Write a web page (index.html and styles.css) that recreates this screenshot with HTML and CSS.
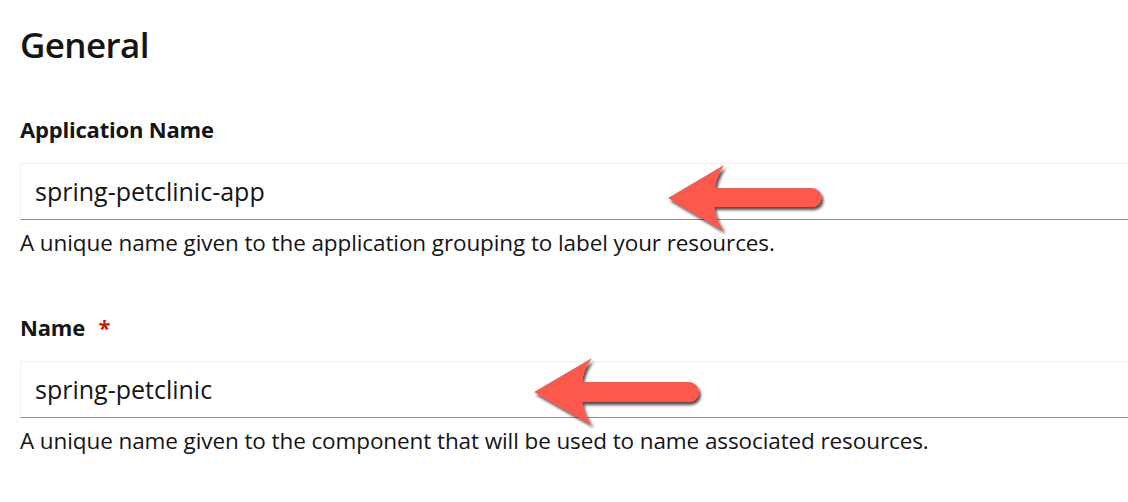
FILE: index.html
```html
<!DOCTYPE html>
<html>
<head>
<meta charset="utf-8">
<link rel="stylesheet" href="styles.css">
</head>
<body>
<div class="page">
  <h1 class="title">General</h1>
  <div class="field">
    <label class="label">Application Name</label>
    <div class="input">spring-petclinic-app</div>
    <div class="helper">A unique name given to the application grouping to label your resources.</div>
    <svg class="arrow arrow-1" width="170" height="90" viewBox="0 0 170 90">
      <defs>
        <filter id="sh1" x="-20%" y="-20%" width="140%" height="160%">
          <feGaussianBlur in="SourceAlpha" stdDeviation="1.6"/>
          <feOffset dx="2" dy="3" result="b"/>
          <feComponentTransfer><feFuncA type="linear" slope="0.7"/></feComponentTransfer>
          <feMerge><feMergeNode/><feMergeNode in="SourceGraphic"/></feMerge>
        </filter>
      </defs>
      <path filter="url(#sh1)" fill="#fd594b" d="M8 43 L64 10 Q56 22 55 33 L152 33 A9.5 9.5 0 0 1 152 52 L54 52 Q56 65 64 76 Z"/>
    </svg>
  </div>
  <div class="field">
    <label class="label">Name <span class="req">*</span></label>
    <div class="input">spring-petclinic</div>
    <div class="helper">A unique name given to the component that will be used to name associated resources.</div>
    <svg class="arrow arrow-2" width="180" height="90" viewBox="0 0 180 90">
      <defs>
        <filter id="sh2" x="-20%" y="-20%" width="140%" height="160%">
          <feGaussianBlur in="SourceAlpha" stdDeviation="1.6"/>
          <feOffset dx="2" dy="3" result="b"/>
          <feComponentTransfer><feFuncA type="linear" slope="0.7"/></feComponentTransfer>
          <feMerge><feMergeNode/><feMergeNode in="SourceGraphic"/></feMerge>
        </filter>
      </defs>
      <path filter="url(#sh2)" fill="#fd594b" d="M8 43 L66 9 Q57 21 56 33 L163 33 A9.8 9.8 0 0 1 163 53 L56 53 Q58 66 66 76 Z"/>
    </svg>
  </div>
</div>
</body>
</html>
```
FILE: styles.css
```css
html, body {
  margin: 0;
  padding: 0;
  background: #ffffff;
  overflow: hidden;
}
.page {
  width: 1128px;
  height: 502px;
  padding-left: 20px;
  box-sizing: border-box;
  overflow: hidden;
  font-family: "Open Sans", "Noto Sans", sans-serif;
  color: #151515;
}
.title {
  margin: 0 0 45px 0;
  padding-top: 20px;
  font-size: 35px;
  font-weight: 600;
  line-height: 49px;
  letter-spacing: -0.6px;
}
.field {
  position: relative;
  height: 198px;
}
.label {
  display: block;
  font-size: 22px;
  font-weight: 700;
  line-height: 30px;
  margin-bottom: 19px;
  letter-spacing: -0.2px;
}
.req {
  color: #c9190b;
  margin-left: 8px;
}
.input {
  height: 57px;
  width: 1200px;
  box-sizing: border-box;
  border-top: 1px solid #f0f0f0;
  border-left: 1px solid #f0f0f0;
  border-bottom: 1px solid #8a8d90;
  padding-left: 14px;
  font-size: 25px;
  line-height: 55px;
}
.helper {
  margin-top: 8px;
  font-size: 22.5px;
  line-height: 30px;
  letter-spacing: -0.1px;
}
.arrow {
  position: absolute;
}
.arrow-1 {
  left: 640px;
  top: 41px;
}
.arrow-2 {
  left: 506px;
  top: 37px;
}
```
